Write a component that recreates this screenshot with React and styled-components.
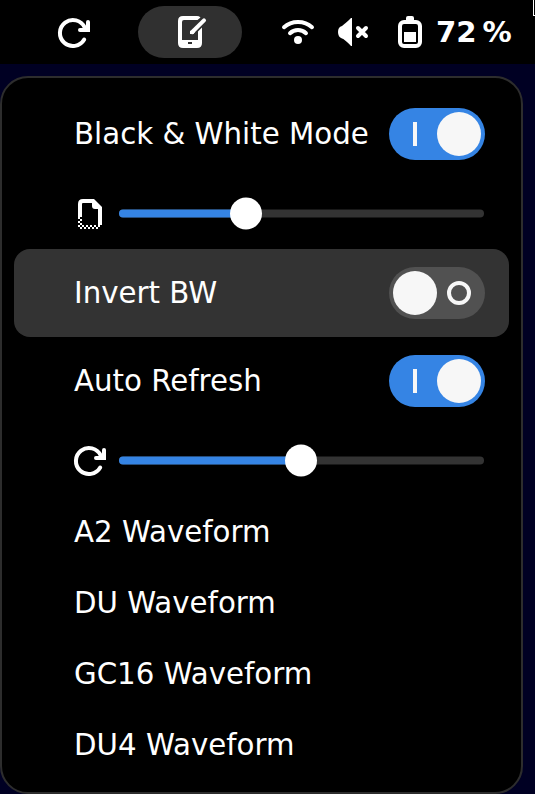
import React from "react";
import styled, { createGlobalStyle } from "styled-components";

const GlobalStyle = createGlobalStyle`
  * { box-sizing: border-box; }
  html, body { margin: 0; height: 100%; overflow: hidden; background: #000023; }
  body { font-family: "DejaVu Sans", sans-serif; color: #fff; }
`;

const Screen = styled.div`
  width: 535px;
  height: 794px;
  overflow: hidden;
  position: relative;
  display: flex;
  flex-direction: column;
  background: #000023;
`;

const TopBar = styled.header`
  flex: none;
  height: 64px;
  display: flex;
  align-items: center;
  padding-left: 58px;
  background: #000;
`;

const Icon = styled.svg`
  flex: none;
  display: block;
  width: 32px;
  height: 32px;
  overflow: visible;
`;

const ActiveIndicator = styled.div`
  width: 104px;
  height: 52px;
  margin: 0 40px 0 48px;
  border-radius: 26px;
  background: #303030;
  display: grid;
  place-items: center;
`;

const StatusGroup = styled.div`
  display: flex;
  align-items: center;
  gap: 24px;
`;

const BatteryStatus = styled.div`
  display: flex;
  align-items: center;
  gap: 10px;
`;

const Percentage = styled.span`
  font-size: 29.2px;
  line-height: 34px;
  font-weight: 700;
  white-space: pre;
`;

const PointerEdge = styled.div`
  position: absolute;
  right: 0;
  top: 0;
  width: 2px;
  height: 16px;
  border-left: 1px solid #fff;
  border-bottom: 1px solid #fff;
  background: #000;
`;

const Menu = styled.main`
  width: 523px;
  height: 718px;
  margin-top: 12px;
  padding: 12px;
  border: 2px solid #2d2d2d;
  border-radius: 28px;
  background: #000;
`;

const SwitchRow = styled.div`
  height: 88px;
  padding: 0 24px 0 60px;
  border-radius: 16px;
  display: flex;
  align-items: center;
  justify-content: space-between;
  background: ${(p) => (p.$hovered ? "#333333" : "transparent")};
`;

const Label = styled.span`
  font-size: 29.28px;
  line-height: 34px;
  white-space: nowrap;
`;

const SwitchTrack = styled.div`
  width: 96px;
  height: 52px;
  padding: 4px;
  border-radius: 26px;
  display: flex;
  flex-direction: ${(p) => (p.$on ? "row" : "row-reverse")};
  align-items: center;
  background: ${(p) => (p.$on ? "#3584e4" : "#515151")};
`;

const SwitchMark = styled.div`
  flex: 1;
  display: grid;
  place-items: center;
`;

const OnMark = styled.i`
  width: 4px;
  height: 24px;
  background: #f7f7f7;
`;

const OffMark = styled.i`
  width: 24px;
  height: 24px;
  border: 4px solid #f7f7f7;
  border-radius: 50%;
`;

const SwitchKnob = styled.div`
  width: 44px;
  height: 44px;
  border-radius: 50%;
  background: #f7f7f7;
`;

const SliderRow = styled.div`
  height: 71px;
  padding: 0 25px 1px 60px;
  display: flex;
  align-items: center;
  gap: 13px;
`;

const SliderTrack = styled.div`
  flex: 1;
  height: 8px;
  border-radius: 4px;
  background: #333;
  display: flex;
  align-items: center;
  transform: translateY(0.5px);
`;

const SliderFill = styled.div`
  width: ${(p) => p.$length}px;
  height: 8px;
  border-radius: 4px 0 0 4px;
  background: #3584e4;
`;

const SliderHandle = styled.div`
  flex: none;
  width: 32px;
  height: 32px;
  margin-left: -16px;
  border-radius: 50%;
  background: #fff;
`;

const MenuItem = styled.div`
  height: 71px;
  padding-left: 60px;
  display: flex;
  align-items: center;
`;

function RefreshIcon() {
  return (
    <Icon viewBox="0 0 32 32" fill="none" stroke="#fff" strokeWidth="4">
      <path d="M26.2 23.5A13 13 0 1 1 26.7 11.5L29 14" strokeLinecap="round" />
      <path d="M22 14H30V6" strokeLinecap="round" />
      <path d="M26 9L32 12V16H24Z" fill="#fff" stroke="none" />
    </Icon>
  );
}

function TabletIcon() {
  return (
    <Icon viewBox="0 0 32 32">
      <path
        fill="#fff"
        fillRule="evenodd"
        d="M5 0H19Q21 0 22.5 1.4L19.5 4H6Q4 4 4 6V24H20V15.5L24 11.5V27Q24 32 19 32H5Q0 32 0 27V5Q0 0 5 0ZM10 26V28H14V26Z"
        transform="translate(4 0)"
      />
      <path d="M18 16.2L30 4.4" stroke="#fff" strokeWidth="4" strokeLinecap="round" />
      <path d="M16 14.8V18H19.5L21 16Z" fill="#fff" />
    </Icon>
  );
}

function WifiIcon() {
  return (
    <Icon viewBox="0 0 32 32" fill="none" stroke="#fff" strokeWidth="4" strokeLinecap="round">
      <path d="M2 11.2C9.6 4.2 22.4 4.2 30 11.2M8 17.2C12.4 13 19.6 13 24 17.2" />
      <circle cx="16" cy="24" r="4" fill="#fff" stroke="none" />
    </Icon>
  );
}

function MutedIcon() {
  return (
    <Icon viewBox="0 0 32 32">
      <path fill="#fff" d="M4 10H6L13 2H14V30H13L6 22.5H4Q0 21 0 16Q0 11 4 10Z" />
      <path fill="#fff" d="M4 10L13 2.5V29L4 22Z" />
      <path d="M20 12L28 20M28 12L20 20" stroke="#fff" strokeWidth="4" strokeLinecap="round" />
    </Icon>
  );
}

function BatteryIcon() {
  return (
    <Icon viewBox="0 0 32 32">
      <rect x="6" y="6" width="20" height="24" rx="4" fill="none" stroke="#fff" strokeWidth="4" />
      <path fill="#fff" d="M12 5V2Q12 0 14 0H18Q20 0 20 2V5ZM10 16H22V26H10Z" />
    </Icon>
  );
}

function DitheredPageIcon() {
  const cells = [];
  for (let row = 0; row < 6; row += 1) {
    for (let col = 0; col < 11; col += 1) {
      const inside = row < 4 ? col < 2 : true;
      if (inside && (row + col) % 2 === 0) cells.push([4 + col * 2, 20 + row * 2]);
    }
  }
  return (
    <Icon viewBox="0 0 32 32">
      <path
        fill="#fff"
        d="M4 20V7Q4 2 9 2H20L28 10V28H24V12H21Q18 12 18 9V6H9Q8 6 8 7V20Z"
      />
      {cells.map(([x, y]) => (
        <rect key={`${x}-${y}`} x={x} y={y} width="2" height="2" fill="#fff" />
      ))}
    </Icon>
  );
}

function Switch({ on }) {
  return (
    <SwitchTrack $on={on} role="switch" aria-checked={on}>
      <SwitchMark>{on ? <OnMark /> : <OffMark />}</SwitchMark>
      <SwitchKnob />
    </SwitchTrack>
  );
}

function SwitchItem({ label, on = false, hovered = false }) {
  return (
    <SwitchRow $hovered={hovered}>
      <Label>{label}</Label>
      <Switch on={on} />
    </SwitchRow>
  );
}

function SliderItem({ icon, length }) {
  return (
    <SliderRow>
      {icon}
      <SliderTrack>
        <SliderFill $length={length} />
        <SliderHandle />
      </SliderTrack>
    </SliderRow>
  );
}

const waveforms = ["A2 Waveform", "DU Waveform", "GC16 Waveform", "DU4 Waveform"];

export default function App() {
  return (
    <>
      <GlobalStyle />
      <Screen>
        <TopBar>
          <RefreshIcon />
          <ActiveIndicator>
            <TabletIcon />
          </ActiveIndicator>
          <StatusGroup>
            <WifiIcon />
            <MutedIcon />
            <BatteryStatus>
              <BatteryIcon />
              <Percentage>{"72\u202f%"}</Percentage>
            </BatteryStatus>
          </StatusGroup>
        </TopBar>
        <Menu>
          <SwitchItem label="Black & White Mode" on />
          <SliderItem icon={<DitheredPageIcon />} length={126.5} />
          <SwitchItem label="Invert BW" hovered />
          <SwitchItem label="Auto Refresh" on />
          <SliderItem icon={<RefreshIcon />} length={182.4} />
          {waveforms.map((name) => (
            <MenuItem key={name}>
              <Label>{name}</Label>
            </MenuItem>
          ))}
        </Menu>
        <PointerEdge />
      </Screen>
    </>
  );
}
